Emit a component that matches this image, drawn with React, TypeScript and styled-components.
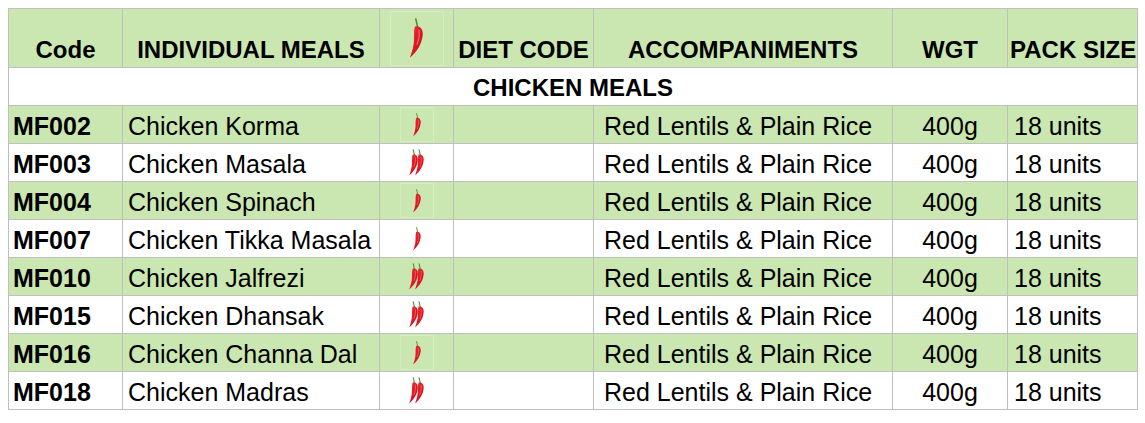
import React from 'react';
import styled, { createGlobalStyle } from 'styled-components';

const GlobalStyle = createGlobalStyle`
  body {
    margin: 0;
    padding: 8px 0 0 8px;
    background: #ffffff;
    color: #000000;
    font-family: 'Liberation Sans', Arial, sans-serif;
  }
`;

const GREEN = '#cbe7b1';
const GRID = '#bfbfbf';

const Sheet = styled.table`
  border-collapse: collapse;
  table-layout: fixed;
  width: 1130px;
  font-family: 'Liberation Sans', Arial, sans-serif;
`;

const HeadRow = styled.tr`
  height: 59px;
  background: ${GREEN};
`;

const HeadCell = styled.th`
  border: 1px solid ${GRID};
  padding: 0 2px 5px;
  font-size: 24px;
  line-height: 24px;
  font-weight: bold;
  text-align: center;
  vertical-align: bottom;
  white-space: nowrap;
  overflow: hidden;
`;

const IconCell = styled.td`
  border: 1px solid ${GRID};
  padding: 0;
  text-align: center;
  vertical-align: middle;
  line-height: 0;
`;

const SectionRow = styled.tr`
  height: 38px;
  background: #ffffff;
`;

const SectionCell = styled.td`
  border: 1px solid ${GRID};
  padding: 0 0 5px;
  font-size: 24px;
  line-height: 24px;
  font-weight: bold;
  text-align: center;
  vertical-align: bottom;
`;

const Row = styled.tr<{ $green: boolean }>`
  height: 38px;
  background: ${(p) => (p.$green ? GREEN : '#ffffff')};
`;

const Cell = styled.td<{ $align?: 'left' | 'center'; $bold?: boolean; $indent?: number }>`
  border: 1px solid ${GRID};
  padding: 0 4px 4px ${(p) => (p.$indent ?? 4)}px;
  font-size: 25px;
  line-height: 25px;
  font-weight: ${(p) => (p.$bold ? 'bold' : 'normal')};
  text-align: ${(p) => p.$align ?? 'left'};
  vertical-align: bottom;
  white-space: nowrap;
  overflow: hidden;
`;

const ChiliFrame = styled.span<{ $big?: boolean }>`
  display: inline-flex;
  align-items: center;
  justify-content: center;
  width: ${(p) => (p.$big ? '54px' : '34px')};
  height: ${(p) => (p.$big ? '55px' : '35px')};
  border: 1px solid rgba(255, 255, 255, 0.22);
  box-sizing: border-box;
`;

const ChiliShape = ({ dx = 0, id }: { dx?: number; id: string }) => (
  <g transform={`translate(${dx} 0)`}>
    <path d="M5.8 0.8 Q6.5 3.4 7 6.4" stroke="#4f8f2c" strokeWidth="1.2" fill="none" strokeLinecap="round" />
    <path
      d="M5.2 6.2 C9.2 5.3 11.3 8.4 10.9 12.6 C10.3 18.8 7 24.8 1.4 29.4 C2.2 27 3.6 23.2 4.2 19 C4.8 14.4 4 9.6 5.2 6.2 Z"
      fill={`url(#${id})`}
    />
    <path d="M8.1 9 C8.7 12 8.1 16 6.7 19.5" stroke="#ff9090" strokeWidth="0.9" fill="none" strokeLinecap="round" opacity="0.65" />
  </g>
);

const Chili = ({ heat, big }: { heat: 1 | 2; big?: boolean }) => {
  const id = `chili-${heat}-${big ? 'b' : 's'}`;
  const w = heat === 1 ? 12 : 19;
  const scale = big ? 1.35 : heat === 2 ? 0.9 : 0.8;
  return (
    <svg width={w * scale} height={30 * scale} viewBox={`0 0 ${w} 30`}>
      <defs>
        <linearGradient id={id} x1="0" y1="0" x2="1" y2="1">
          <stop offset="0" stopColor="#f0323a" />
          <stop offset="0.6" stopColor="#d9141e" />
          <stop offset="1" stopColor="#a50d15" />
        </linearGradient>
      </defs>
      {heat === 2 && <ChiliShape dx={0} id={id} />}
      <ChiliShape dx={heat === 2 ? 6.5 : 0} id={id} />
    </svg>
  );
};

type Meal = { code: string; name: string; heat: 1 | 2 };

const meals: Meal[] = [
  { code: 'MF002', name: 'Chicken Korma', heat: 1 },
  { code: 'MF003', name: 'Chicken Masala', heat: 2 },
  { code: 'MF004', name: 'Chicken Spinach', heat: 1 },
  { code: 'MF007', name: 'Chicken Tikka Masala', heat: 1 },
  { code: 'MF010', name: 'Chicken Jalfrezi', heat: 2 },
  { code: 'MF015', name: 'Chicken Dhansak', heat: 2 },
  { code: 'MF016', name: 'Chicken Channa Dal', heat: 1 },
  { code: 'MF018', name: 'Chicken Madras', heat: 2 },
];

const App = () => {
  return (
    <>
      <GlobalStyle />
      <Sheet>
        <colgroup>
          <col style={{ width: 114 }} />
          <col style={{ width: 257 }} />
          <col style={{ width: 74 }} />
          <col style={{ width: 140 }} />
          <col style={{ width: 299 }} />
          <col style={{ width: 115 }} />
          <col style={{ width: 130 }} />
        </colgroup>
        <thead>
          <HeadRow>
            <HeadCell>Code</HeadCell>
            <HeadCell>INDIVIDUAL MEALS</HeadCell>
            <IconCell>
              <ChiliFrame $big>
                <Chili heat={1} big />
              </ChiliFrame>
            </IconCell>
            <HeadCell>DIET CODE</HeadCell>
            <HeadCell>ACCOMPANIMENTS</HeadCell>
            <HeadCell>WGT</HeadCell>
            <HeadCell>PACK SIZE</HeadCell>
          </HeadRow>
        </thead>
        <tbody>
          <SectionRow>
            <SectionCell colSpan={7}>CHICKEN MEALS</SectionCell>
          </SectionRow>
          {meals.map((m, i) => (
            <Row key={m.code} $green={i % 2 === 0}>
              <Cell $bold>{m.code}</Cell>
              <Cell $indent={5}>{m.name}</Cell>
              <IconCell>
                {m.heat === 1 ? (
                  <ChiliFrame>
                    <Chili heat={1} />
                  </ChiliFrame>
                ) : (
                  <Chili heat={2} />
                )}
              </IconCell>
              <Cell />
              <Cell $indent={10}>Red Lentils &amp; Plain Rice</Cell>
              <Cell $align="center">400g</Cell>
              <Cell $indent={6}>18 units</Cell>
            </Row>
          ))}
        </tbody>
      </Sheet>
    </>
  );
};

export default App;
